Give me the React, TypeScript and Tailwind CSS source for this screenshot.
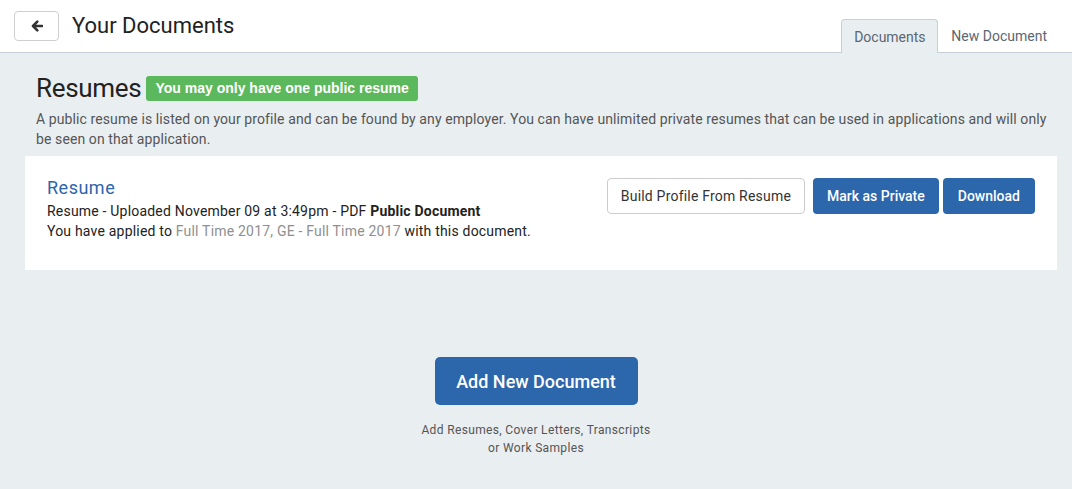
export default function App() {
  return (
    <div className="min-h-[489px] bg-[#e9eef1] font-['Roboto',sans-serif] text-[#333]">
      {/* header */}
      <div className="flex h-[53px] items-end justify-between border-b border-[#c6ced6] bg-white pl-[14px] pr-[12px]">
        <div className="flex items-center self-stretch pb-px">
          <button
            type="button"
            className="flex h-[30px] w-[45px] items-center justify-center rounded-[4px] border border-[#cfcfcf] bg-white"
          >
            <svg width="12" height="12" viewBox="0 0 12 12" fill="none">
              <path d="M6.3 1.6 2 6l4.3 4.4M2.5 6H11" stroke="#333" strokeWidth="2.6" strokeLinecap="round" strokeLinejoin="round" />
            </svg>
          </button>
          <h1 className="ml-[13px] text-[22px] leading-none text-[#222]">Your Documents</h1>
        </div>
        <div className="-mb-px flex text-[14px]">
          <div className="flex h-[34px] w-[97px] items-center justify-center rounded-t-[4px] border border-b-0 border-[#c6ced6] bg-[#e9eef1] pt-[2px] text-[#5c6670]">
            Documents
          </div>
          <div className="flex h-[34px] items-center px-[13px] text-[#5c6670]">New Document</div>
        </div>
      </div>

      {/* resumes */}
      <div className="pl-[36px] pr-[16px] pt-[19px]">
        <div className="flex items-center">
          <h2 className="text-[26px] leading-[32px] tracking-[-0.3px] text-[#222]">Resumes</h2>
          <span className="ml-[5px] rounded-[3px] bg-[#5cb85c] px-[9px] py-[3px] font-['Liberation_Sans',sans-serif] text-[14px] font-bold leading-[19px] text-white">
            You may only have one public resume
          </span>
        </div>
        <p className="mt-[5px] text-[14px] leading-[20px] tracking-[0.1px] text-[#555]">
          A public resume is listed on your profile and can be found by any employer. You can have unlimited private resumes that can be used in applications and will only be seen on that application.
        </p>
      </div>

      <div className="ml-[25px] mr-[15px] mt-[7px] flex h-[114px] items-start justify-between bg-white pl-[22px] pr-[22px] pt-[20px]">
        <div className="tracking-[0.2px]">
          <a className="text-[18px] leading-[24px] tracking-[0.5px] text-[#2c66ab]">Resume</a>
          <div className="text-[14px] leading-[20px] text-[#222]">
            Resume - Uploaded November 09 at 3:49pm - PDF <b>Public Document</b>
          </div>
          <div className="text-[14px] leading-[20px] text-[#222]">
            You have applied to <span className="text-[#8f8f8f]">Full Time 2017, GE - Full Time 2017</span> with this document.
          </div>
        </div>
        <div className="mt-[2px] flex gap-[4px] text-[14px]">
          <button type="button" className="mr-[4px] h-[36px] rounded-[4px] border border-[#ccc] bg-white px-[13px] tracking-[0.2px] text-[#333]">
            Build Profile From Resume
          </button>
          <button type="button" className="h-[36px] rounded-[4px] bg-[#2c66ab] px-[14px] font-medium text-white">
            Mark as Private
          </button>
          <button type="button" className="h-[36px] rounded-[4px] bg-[#2c66ab] px-[15px] font-medium text-white">
            Download
          </button>
        </div>
      </div>

      {/* add new */}
      <div className="flex flex-col items-center pt-[87px]">
        <button type="button" className="h-[48px] w-[203px] rounded-[5px] bg-[#2c66ab] text-[18px] font-medium text-white">
          Add New Document
        </button>
        <p className="mt-[16px] text-center text-[12px] leading-[18px] tracking-[0.35px] text-[#555]">
          Add Resumes, Cover Letters, Transcripts
          <br />
          or Work Samples
        </p>
      </div>
    </div>
  );
}
